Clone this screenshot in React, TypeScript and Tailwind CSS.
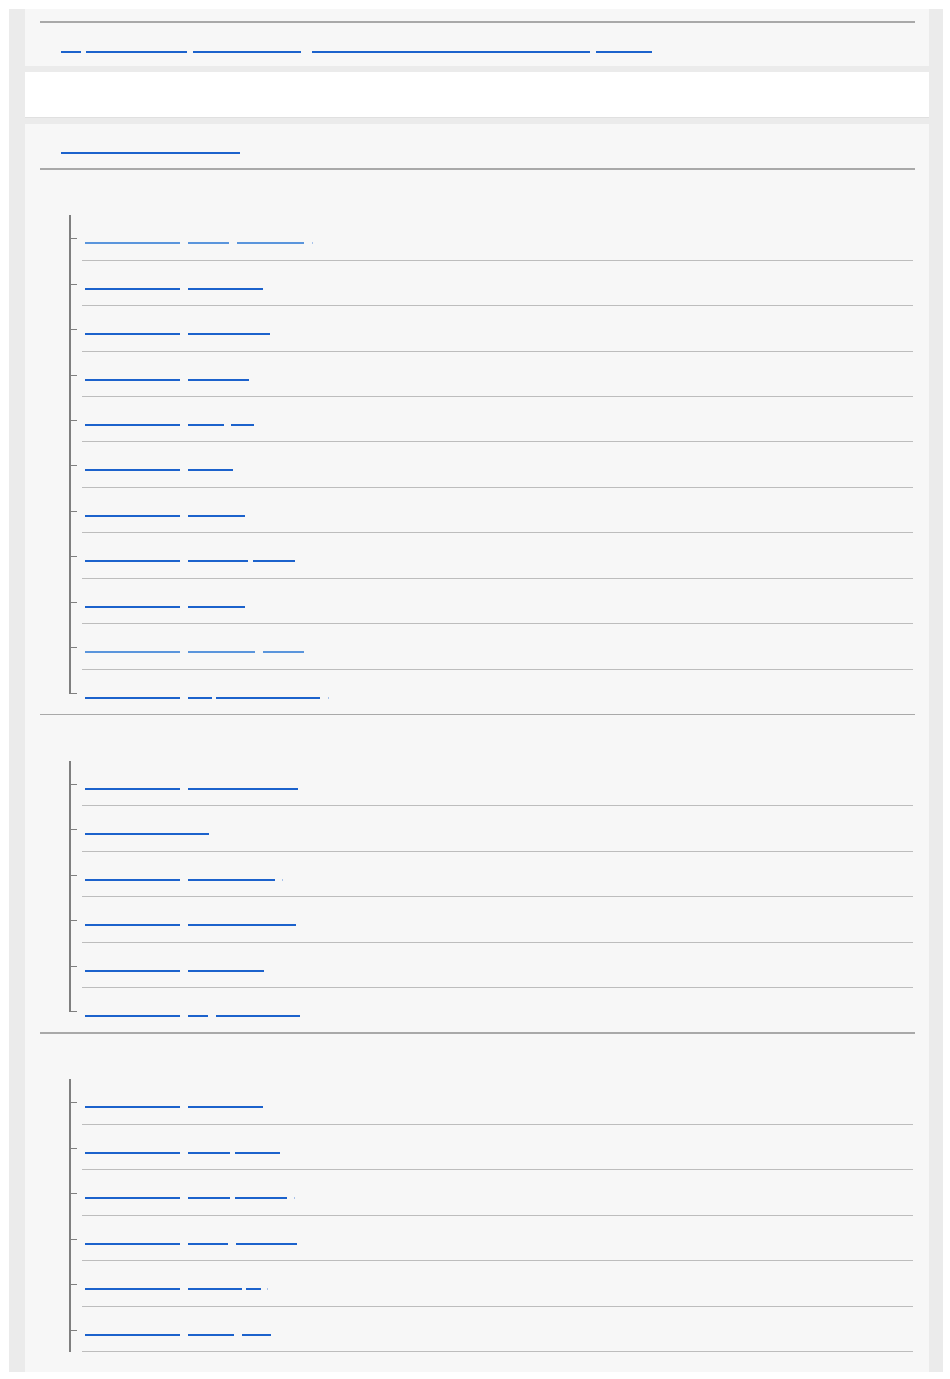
import React from 'react';

type Seg = [number, number, ('dot' | undefined)?];
type Row = { segs: Seg[]; light?: boolean };

const headerLinks: Seg[] = [[61, 81], [86, 187], [193, 301], [312, 590], [596, 652]];
const titleLink: Seg[] = [[61, 240]];

const groups: { rows: Row[]; open?: boolean }[] = [
  {
    rows: [
      { segs: [[85, 180], [188, 229], [237, 304], [312, 313, 'dot']], light: true },
      { segs: [[85, 180], [188, 263]] },
      { segs: [[85, 180], [188, 270]] },
      { segs: [[85, 180], [188, 249]] },
      { segs: [[85, 180], [188, 224], [231, 254]] },
      { segs: [[85, 180], [188, 233]] },
      { segs: [[85, 180], [188, 245]] },
      { segs: [[85, 180], [188, 248], [253, 295]] },
      { segs: [[85, 180], [188, 245]] },
      { segs: [[85, 180], [188, 255], [263, 304]], light: true },
      { segs: [[85, 180], [188, 212], [216, 320], [328, 329, 'dot']] },
    ],
  },
  {
    rows: [
      { segs: [[85, 180], [188, 298]] },
      { segs: [[85, 209]] },
      { segs: [[85, 180], [188, 275], [282, 283, 'dot']] },
      { segs: [[85, 180], [188, 296]] },
      { segs: [[85, 180], [188, 264]] },
      { segs: [[85, 180], [188, 208], [216, 300]] },
    ],
  },
  {
    open: true,
    rows: [
      { segs: [[85, 180], [188, 263]] },
      { segs: [[85, 180], [188, 230], [235, 280]] },
      { segs: [[85, 180], [188, 230], [235, 287], [294, 295, 'dot']] },
      { segs: [[85, 180], [188, 228], [236, 297]] },
      { segs: [[85, 180], [188, 242], [246, 261], [267, 268, 'dot']] },
      { segs: [[85, 180], [188, 234], [242, 271]] },
    ],
  },
];

// underline-only links (the label text never painted in the source)
const Links = ({ segs, origin, light }: { segs: Seg[]; origin: number; light?: boolean }) => {
  let prev = origin;
  return (
    <div className="flex items-start">
      {segs.map(([a, b, kind], i) => {
        const ml = a - prev;
        prev = b;
        return (
          <a
            key={i}
            href="#"
            className={
              kind === 'dot'
                ? 'block h-[2px] bg-[#a9c3ea]'
                : light
                ? 'block h-[2px] bg-[#5a95dc]'
                : 'block h-[2px] bg-[#1c62cc]'
            }
            style={{ width: b - a, marginLeft: ml }}
          />
        );
      })}
    </div>
  );
};

const Divider = () => <div className="h-[1.5px] bg-[#a9a9a9] ml-[15px] mr-[14px]" />;

export default function App() {
  return (
    <div className="min-h-screen bg-white font-['Liberation_Sans',Arial,sans-serif]">
      <div className="ml-[9px] mt-[9px] w-[934px] h-[1363px] bg-[#ebebeb] pl-[16px] pr-[14px] flex flex-col gap-[6px] overflow-hidden">
        {/* breadcrumb bar */}
        <div className="h-[57px] shrink-0 bg-[#f7f7f7] pt-[12px]">
          <Divider />
          <div className="pt-[28px]">
            <Links segs={headerLinks} origin={25} />
          </div>
        </div>

        {/* blank bar */}
        <div className="h-[46px] shrink-0 bg-white border-b border-[#e0e0e0]" />

        {/* topic tree */}
        <div className="flex-1 bg-[#f7f7f7]">
          <div className="h-[44.3px] pt-[27.5px]">
            <Links segs={titleLink} origin={25} />
          </div>
          <Divider />

          {groups.map((g, gi) => (
            <div key={gi}>
              <ul className="pt-[45.5px] ml-[44px] mr-[16px]">
                {g.rows.map((r, ri) => {
                  const last = ri === g.rows.length - 1 && !g.open;
                  return (
                    <li key={ri} className="flex">
                      <div className="w-[8px] shrink-0 flex flex-col">
                        <div className="h-[24px] border-l-2 border-b-[1.5px] border-[#7f7f7f]" />
                        {!last && <div className="flex-1 border-l-2 border-[#7f7f7f]" />}
                      </div>
                      <div
                        className={
                          last
                            ? 'ml-[5px] flex-1 h-[44.3px] pt-[27px]'
                            : 'ml-[5px] flex-1 h-[45.44px] pt-[27px] border-b-[1.5px] border-[#bdbdbd]'
                        }
                      >
                        <Links segs={r.segs} origin={82} light={r.light} />
                      </div>
                    </li>
                  );
                })}
              </ul>
              {gi < groups.length - 1 && <Divider />}
            </div>
          ))}
        </div>
      </div>
    </div>
  );
}
